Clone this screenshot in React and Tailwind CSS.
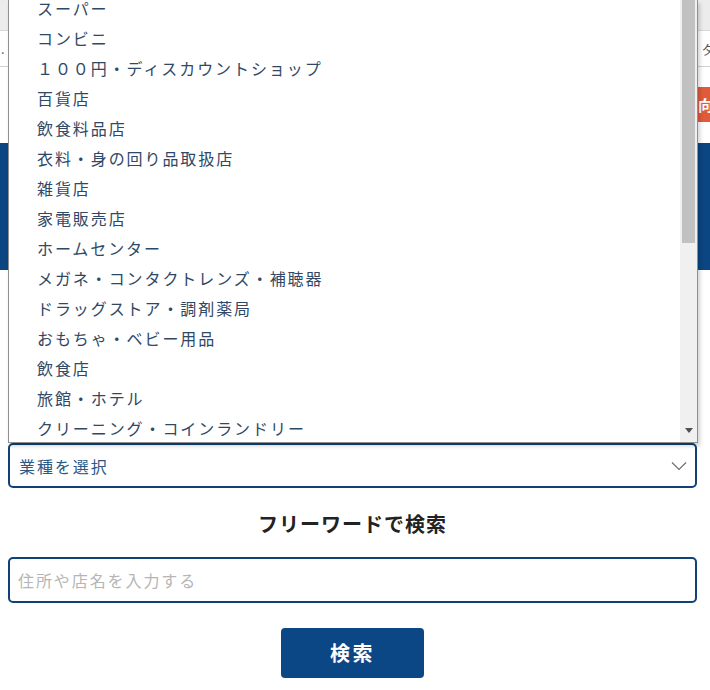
import React from "react";

const items = [
  "スーパー",
  "コンビニ",
  "１００円・ディスカウントショップ",
  "百貨店",
  "飲食料品店",
  "衣料・身の回り品取扱店",
  "雑貨店",
  "家電販売店",
  "ホームセンター",
  "メガネ・コンタクトレンズ・補聴器",
  "ドラッグストア・調剤薬局",
  "おもちゃ・ベビー用品",
  "飲食店",
  "旅館・ホテル",
  "クリーニング・コインランドリー",
  "理容・美容",
];

export default function App() {
  return (
    <div
      className="relative w-[710px] h-[690px] overflow-hidden bg-white"
      style={{ fontFamily: '"Noto Sans CJK JP", "Noto Sans", sans-serif' }}
    >
      {/* background page */}
      <div className="h-[31px] bg-[#ececec] border-b border-[#d8d8d8]" />
      <div className="h-[36px] border-b border-[#d0d0d0] flex items-center justify-between text-[13px] leading-none text-[#555]">
        <span className="pl-[1px]">.</span>
        <span className="mr-[-5px]">ダ</span>
      </div>
      <div className="h-[20px]" />
      <div className="h-[35px] flex justify-end">
        <div className="w-[13px] bg-[#e05b3b] overflow-hidden flex items-center">
          <span className="text-white font-bold text-[15px] leading-none pl-[1px] whitespace-nowrap">向け</span>
        </div>
      </div>
      <div className="h-[21px]" />
      <div className="h-[127px] bg-[#0b4682]" />
      <div className="h-[173px]" />

      {/* form */}
      <div className="pl-[8px] pr-[13px] flex flex-col">
        <div className="h-[45px] border-2 border-[#0e4278] rounded-[5px] flex items-center justify-between pl-[9px] pr-[8px]">
          <span className="text-[16px] tracking-[0.12em] leading-none text-[#2a5887]">業種を選択</span>
          <svg width="16" height="10" viewBox="0 0 16 10" fill="none">
            <path d="M1 1.5 L8 8.5 L15 1.5" stroke="#6b6b6b" strokeWidth="1.1" />
          </svg>
        </div>
        <div className="h-[69px] flex items-center justify-center">
          <h2 className="text-[20px] font-semibold tracking-[0.05em] leading-none text-[#222] pt-[2px]">
            フリーワードで検索
          </h2>
        </div>
        <div className="h-[46px] border-2 border-[#0e4278] rounded-[5px] flex items-center pl-[8px]">
          <span className="text-[16px] tracking-[0.12em] leading-none text-[#b5b5b5]">住所や店名を入力する</span>
        </div>
        <div className="flex justify-center pt-[25px]">
          <button className="w-[143px] h-[50px] bg-[#0b4785] rounded-[4px] text-white text-[20px] font-bold tracking-[0.12em] leading-none flex items-center justify-center">
            検索
          </button>
        </div>
      </div>

      {/* dropdown popup */}
      <div className="absolute left-[8px] top-0 w-[690px] h-[443px] bg-white border border-t-0 border-[#8f8f8f] shadow-[2px_3px_4px_rgba(0,0,0,0.18)] flex">
        <div className="flex-1 overflow-hidden">
          <ul className="mt-[-7px]">
            {items.map((t) => (
              <li
                key={t}
                className="h-[30px] flex items-center pl-[28px] text-[16px] tracking-[0.12em] leading-none text-[#2f4866] whitespace-nowrap"
              >
                {t}
              </li>
            ))}
          </ul>
        </div>
        <div className="w-[17px] bg-[#f0f0f0] flex flex-col">
          <div className="mx-[2px] h-[243px] bg-[#c1c1c1]" />
          <div className="flex-1" />
          <div className="h-[20px] flex items-center justify-center pb-[3px]">
            <svg width="8" height="5" viewBox="0 0 8 5">
              <path d="M0 0 L8 0 L4 5 Z" fill="#505050" />
            </svg>
          </div>
        </div>
      </div>
    </div>
  );
}
